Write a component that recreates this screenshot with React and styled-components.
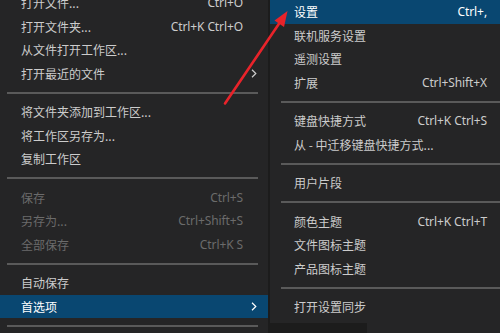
import React from "react";
import styled, { createGlobalStyle, css } from "styled-components";

const colors = {
  menu: "#252526",
  backdrop: "#1c1c1c",
  text: "#cccccc",
  disabled: "#6b6b6b",
  active: "#094771",
  activeText: "#ffffff",
  separator: "#5a5a5a",
  arrow: "#e8232a",
};

const GlobalStyle = createGlobalStyle`
  html, body {
    margin: 0;
    padding: 0;
    background: ${colors.menu};
  }
  body {
    width: 500px;
    height: 333px;
    overflow: hidden;
    font-family: "Noto Sans", "Noto Sans CJK SC", sans-serif;
  }
`;

const fileMenu = [
  { label: "打开文件...", keys: "Ctrl+O" },
  { label: "打开文件夹...", keys: "Ctrl+K Ctrl+O" },
  { label: "从文件打开工作区..." },
  { label: "打开最近的文件", submenu: true },
  "sep",
  { label: "将文件夹添加到工作区..." },
  { label: "将工作区另存为..." },
  { label: "复制工作区" },
  "sep",
  { label: "保存", keys: "Ctrl+S", disabled: true },
  { label: "另存为...", keys: "Ctrl+Shift+S", disabled: true },
  { label: "全部保存", keys: "Ctrl+K S", disabled: true },
  "sep",
  { label: "自动保存" },
  { label: "首选项", submenu: true, active: true },
  "sep",
];

const prefMenu = [
  { label: "设置", keys: "Ctrl+,", active: true },
  { label: "联机服务设置" },
  { label: "遥测设置" },
  { label: "扩展", keys: "Ctrl+Shift+X" },
  "sep",
  { label: "键盘快捷方式", keys: "Ctrl+K Ctrl+S" },
  { label: "从 - 中迁移键盘快捷方式..." },
  "sep",
  { label: "用户片段" },
  "sep",
  { label: "颜色主题", keys: "Ctrl+K Ctrl+T" },
  { label: "文件图标主题" },
  { label: "产品图标主题" },
  "sep",
  { label: "打开设置同步" },
];

const Chevron = () => (
  <svg width="6" height="9" viewBox="0 0 6 9">
    <polyline
      points="1,0.8 4.8,4.5 1,8.2"
      fill="none"
      stroke="currentColor"
      strokeWidth="1.2"
    />
  </svg>
);

const MenuList = ({ items, side }) => (
  <>
    {items.map((item, i) =>
      item === "sep" ? (
        <Separator key={i} side={side} />
      ) : (
        <Row key={i} side={side} active={item.active} disabled={item.disabled}>
          <Label>{item.label}</Label>
          {item.keys && <Keys>{item.keys}</Keys>}
          {side === "main" && (
            <SubSlot>{item.submenu && <Chevron />}</SubSlot>
          )}
        </Row>
      )
    )}
  </>
);

const App = () => (
  <>
    <GlobalStyle />
    <Screen>
      <MainMenu>
        <MenuList items={fileMenu} side="main" />
      </MainMenu>
      <SubColumn>
        <SubMenu>
          <MenuList items={prefMenu} side="sub" />
        </SubMenu>
        <BottomStrip>
          <Shadow />
        </BottomStrip>
      </SubColumn>
      <Pointer width="500" height="333" viewBox="0 0 500 333">
        <line
          x1="225"
          y1="103.5"
          x2="280.5"
          y2="21.5"
          stroke={colors.arrow}
          strokeWidth="2.6"
          strokeLinecap="round"
        />
        <polygon
          points="287.5,11 284,27 274.5,20.5"
          fill={colors.arrow}
        />
      </Pointer>
    </Screen>
  </>
);

const Screen = styled.div`
  position: relative;
  display: flex;
  width: 500px;
  height: 333px;
  overflow: hidden;
  background: ${colors.backdrop};
`;

const MainMenu = styled.div`
  width: 268px;
  flex-shrink: 0;
  margin-top: -9px;
  background: ${colors.menu};
`;

const SubColumn = styled.div`
  flex: 1;
  display: flex;
  flex-direction: column;
  margin-left: 2px;
`;

const SubMenu = styled.div`
  background: ${colors.menu};
  padding-bottom: 4.5px;
`;

const BottomStrip = styled.div`
  flex: 1;
  display: flex;
  background: ${colors.menu};
`;

const Shadow = styled.div`
  width: 97px;
  background: ${colors.backdrop};
`;

const Row = styled.div`
  display: flex;
  align-items: center;
  height: 23.5px;
  font-size: 12px;
  color: ${colors.text};
  white-space: nowrap;
  padding-left: ${({ side }) => (side === "main" ? "21px" : "24px")};
  padding-right: ${({ side }) => (side === "main" ? "0" : "13px")};

  ${({ disabled }) =>
    disabled &&
    css`
      color: ${colors.disabled};
    `}

  ${({ active }) =>
    active &&
    css`
      background: ${colors.active};
      color: ${colors.activeText};
    `}
`;

const Label = styled.span`
  flex: 1;
  font-family: "Noto Sans CJK SC", "Noto Sans", sans-serif;
`;

const Keys = styled.span`
  font-family: "Noto Sans", "Noto Sans CJK SC", sans-serif;
  letter-spacing: -0.1px;
`;

const SubSlot = styled.span`
  width: 25px;
  flex-shrink: 0;
  display: flex;
  align-items: center;
  padding-left: 8px;
  box-sizing: border-box;
`;

const Separator = styled.div`
  height: 15px;
  display: flex;
  align-items: center;
  padding: ${({ side }) => (side === "main" ? "0 10px 0 7px" : "0 0 0 11px")};

  &::after {
    content: "";
    flex: 1;
    height: 2px;
    background: ${colors.separator};
  }
`;

const Pointer = styled.svg`
  position: absolute;
  left: 0;
  top: 0;
  pointer-events: none;
`;

export default App;
